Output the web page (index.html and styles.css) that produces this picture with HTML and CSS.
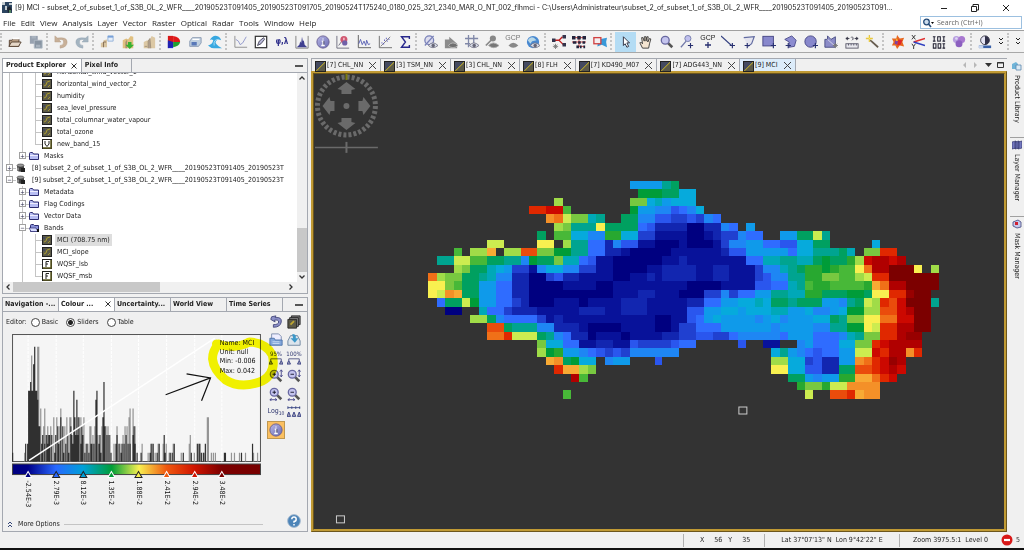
FILE: index.html
```html
<!DOCTYPE html>
<html lang="en">
<head>
<meta charset="utf-8">
<title>[9] MCI</title>
<link rel="stylesheet" href="styles.css">
</head>
<body>
<svg class="sprite" aria-hidden="true">
  <defs>
    <linearGradient id="ramp"><stop offset="0" stop-color="#000080"/><stop offset=".062" stop-color="#000088"/><stop offset=".175" stop-color="#2868ff"/><stop offset=".284" stop-color="#00a0d8"/><stop offset=".4" stop-color="#009e38"/><stop offset=".51" stop-color="#f8f050"/><stop offset=".62" stop-color="#f05a10"/><stop offset=".733" stop-color="#d01400"/><stop offset=".844" stop-color="#7c0000"/><stop offset="1" stop-color="#780000"/></linearGradient>
    <linearGradient id="ball" x2="1" y2="1"><stop offset="0" stop-color="#b8b8e8"/><stop offset="1" stop-color="#6a6ab0"/></linearGradient>
  </defs>
  <symbol id="band" viewBox="0 0 10 10"><rect x=".5" y=".5" width="9" height="9" fill="#5c5a48" stroke="#222"/><path d="M2 7l2-1 1-3 3-1M6 8l2-2" stroke="#a89a30" fill="none"/><path d="M1 2h2v2H1z" fill="#444a60"/></symbol>
  <symbol id="fband" viewBox="0 0 10 10"><rect x=".5" y=".5" width="9" height="9" fill="#fff" stroke="#222"/><path d="M1 9h8V1" stroke="#5c5a20" stroke-width="1.5" fill="none"/><path d="M4 8V2.5h3M4 5h2" stroke="#222" fill="none"/></symbol>
  <symbol id="vband" viewBox="0 0 10 10"><rect x=".5" y=".5" width="9" height="9" fill="#fff" stroke="#222"/><path d="M1 9h8V1" stroke="#5c5a20" stroke-width="1.5" fill="none"/><path d="M3 2v3l2 2.500l2-2.500V2" stroke="#222" fill="none"/></symbol>
  <symbol id="folder" viewBox="0 0 10 10"><path d="M.5 8.500v-6q0-1 1-1h2l1 1.500h5v5.500z" fill="#b8bef4" stroke="#2c2c70"/><path d="M1 4.500h8" stroke="#eef"/></symbol>
  <symbol id="folderopen" viewBox="0 0 10 10"><path d="M1.500 8.500v-6q0-1 1-1h2l1 1h4v6z" fill="#8890d8" stroke="#2c2c70"/><path d="M0 5h7l2 3.500H2z" fill="#d8dcff" stroke="#2c2c70" stroke-width=".7"/><path d="M8 6h2v3H8z" fill="#111"/></symbol>
  <symbol id="db" viewBox="0 0 10 10"><path d="M1 2.500v5q3.500 2.500 7 0v-5z" fill="#444"/><ellipse cx="4.500" cy="2.500" rx="3.500" ry="1.500" fill="#999" stroke="#333" stroke-width=".6"/><path d="M5 5h4v4H5z" fill="#222"/><path d="M2 4.500v3" stroke="#ccc"/></symbol>
  <symbol id="snap" viewBox="0 0 12 12"><path d="M1 0h10v11H1z" fill="#2c4460"/><path d="M1 0h3v3H1zM4 4h2v4H4zM8 1h3v2H8z" fill="#c4ccd0"/><path d="M6 6l3-2 2 4-4 3z" fill="#1c2430"/><path d="M8 8h2v3H8z" fill="#508060"/></symbol>
  <symbol id="open" viewBox="0 0 16 16"><path d="M1.500 13V6h3l1-1.500h7V13z" fill="#b49a80" stroke="#503c2c"/><path d="M1 13l3-5h11l-3 5z" fill="#e6d8c8" stroke="#503c2c"/><path d="M5 4h8" stroke="#fff" stroke-width="2"/></symbol>
  <symbol id="save" viewBox="0 0 16 16"><path d="M1 1h9v9H1z" fill="#98a2b0"/><path d="M6 6h9v9H6z" fill="#8894a2" stroke="#b0bac6"/><path d="M3 1h5v3H3zM8 11h5v3H8z" fill="#a8b2be"/></symbol>
  <symbol id="undo" viewBox="0 0 16 16"><path d="M1 1v7h7L5.500 5.500Q11 4 11 8t-4 4v3q8-1 8-7T4 3.500z" fill="#c8b098" stroke="#b09880" stroke-width=".5"/></symbol>
  <symbol id="redo" viewBox="0 0 16 16"><path d="M15 1v7H8l2.500-2.500Q5 4 5 8t4 4v3Q1 14 1 8T12 3.500z" fill="#a4b4c0" stroke="#90a0b0" stroke-width=".5"/></symbol>
  <symbol id="imp1" viewBox="0 0 16 16"><path d="M1 14V9l3-1V6l4-1v9z" fill="#d8c4a0"/><path d="M4 14V8h3" stroke="#806850" fill="none"/><path d="M9 1h6v6H9z" fill="#e4eefa" stroke="#90b0d8"/><path d="M9 1h6v2H9z" fill="#78a0d8"/></symbol>
  <symbol id="imp2" viewBox="0 0 16 16"><path d="M2 15V6l4-2 2 1 3-4 3 1v13z" fill="#e0c080"/><path d="M5 15V8l2-3v10" fill="#a89070"/><path d="M8 8h4v3h3l-5 5-5-5h3z" fill="#38b030"/></symbol>
  <symbol id="imp3" viewBox="0 0 16 16"><path d="M2 15V8l4-2 2 1 3-6 4 2v12z" fill="#dcc8a4"/><path d="M7 15V7l2-3 1 11M3 13h3" fill="#b0a090" stroke="#a09078"/></symbol>
  <symbol id="rgbshape" viewBox="0 0 16 16"><path d="M1 1h6v7H1z" fill="#d81818"/><path d="M7 1q8 1 8 7H7z" fill="#e01818"/><path d="M1 8h6v7H1z" fill="#1830d0"/><path d="M7 8h8q-1 5-8 6z" fill="#20a030"/><path d="M1 6l6 2v5l-6 2z" fill="#2020b0"/></symbol>
  <symbol id="box3d" viewBox="0 0 16 16"><path d="M2 7l3-4h10v6l-3 4H2z" fill="#c0d0e0" stroke="#8898b0"/><path d="M4 8h6v4H4z" fill="#5878b8"/><path d="M5 5h8" stroke="#fff" stroke-width="1.500"/></symbol>
  <symbol id="wave" viewBox="0 0 16 16"><path d="M0 12q5-1 6-6Q4 4 2 6q3-6 8-5 4 1 5 5-4-2-6 1t7 8H9q-5 1-9-3z" fill="#38a8e0"/><path d="M7 12q-1-7 5-7" stroke="#a8e0f8" fill="none"/></symbol>
  <symbol id="profile" viewBox="0 0 16 16"><path d="M1 1v13h14" stroke="#888" fill="none"/><path d="M2 5l3 2 2 4 3-2 4-7" stroke="#8890c8" fill="none"/></symbol>
  <symbol id="pen" viewBox="0 0 16 16"><rect x="1.500" y="1.500" width="13" height="13" fill="#fff" stroke="#333" stroke-width="1.400"/><path d="M4 12l2-5 5-4 1 2-4 5z" fill="#b8b8d8" stroke="#445"/></symbol>
  <symbol id="histo" viewBox="0 0 16 16"><path d="M1 1v14h14V1" stroke="#777" fill="none"/><path d="M2 14l3-3 1-4 1 2 1-7 1 5 1-1 1 5 3 3z" fill="#404090"/></symbol>
  <symbol id="info" viewBox="0 0 16 16"><circle cx="8" cy="8" r="7" fill="url(#ball)" stroke="#665c90"/><path d="M8 4v1M6.500 7H8v5M6 12h4" stroke="#fff" stroke-width="1.500" fill="none"/><path d="M9 7v4" stroke="#445"/></symbol>
  <symbol id="pinchart" viewBox="0 0 16 16"><path d="M1 1v14h14M3 12l3-4" stroke="#667" fill="none"/><circle cx="9" cy="5" r="4" fill="#d05870"/><circle cx="10" cy="9" r="3" fill="#7060a8"/><path d="M8 3h2v3H8z" fill="#f0b0c0"/></symbol>
  <symbol id="spectrum" viewBox="0 0 16 16"><path d="M1.500 0v14.500H16" stroke="#555" fill="none"/><path d="M2 10l2-5 2 6 2-4 2 5 1-6 2 5 2-1" stroke="#5058b0" fill="none"/></symbol>
  <symbol id="scatter" viewBox="0 0 16 16"><path d="M1.500 1v13.500H16" stroke="#666" fill="none"/><path d="M3 13L14 2" stroke="#777"/><path d="M4 9h1M6 10h1M7 6h1M10 7h1M9 4h1M12 5h1" stroke="#55b" stroke-width="1.500"/></symbol>
  <symbol id="sigma" viewBox="0 0 16 16"><path d="M13 4.500V2H4l4.500 6L4 14h9v-2.500" fill="none" stroke="#28288c" stroke-width="1.600"/></symbol>
  <symbol id="eye" viewBox="0 0 16 16"><path d="M5 12q5-6 11 0-6 5-11 0z" fill="#d8dce8" stroke="#778"/><circle cx="10.500" cy="12" r="2" fill="#667"/></symbol>
  <symbol id="nodata" viewBox="0 0 16 16"><circle cx="6" cy="6" r="5" fill="#dde" stroke="#7880b8" stroke-width="1.500"/><path d="M1 12L11 1" stroke="#7880b8" stroke-width="1.500"/><use href="#eye"/></symbol>
  <symbol id="geom" viewBox="0 0 16 16"><path d="M1 5h5V2l9 8v5H1z" fill="#8c8c8c"/><path d="M5 12q5-6 11 0-6 5-11 0z" fill="#707070" stroke="#bbb"/></symbol>
  <symbol id="grid" viewBox="0 0 16 16"><path d="M4 0v14M10 0v9M0 4h15M0 10h6" stroke="#8088a8" stroke-width="1.500"/><use href="#eye"/></symbol>
  <symbol id="pineye" viewBox="0 0 16 16"><circle cx="9" cy="4" r="3.500" fill="#888"/><path d="M7 6L1 12" stroke="#888" stroke-width="2"/><path d="M4 12q5-6 12 0-6 5-12 0z" fill="#777" stroke="#aaa"/></symbol>
  <symbol id="worldeye" viewBox="0 0 16 16"><circle cx="8" cy="8" r="7" fill="#4888d0"/><path d="M2 6q3-5 7-3l3 3-5 1-2 3z" fill="#b8d8e8"/><use href="#eye"/></symbol>
  <symbol id="graph" viewBox="0 0 16 16"><path d="M3 6h5l4-4M8 6l5 5" stroke="#c02020" stroke-width="1.500" fill="none"/><path d="M0 4h4v4H0zM12 0h4v4h-4zM12 9h4v4h-4z" fill="#34344c"/><path d="M4 10v6M1 13h6M2 11l4 4M6 11l-4 4" stroke="#777"/></symbol>
  <symbol id="batch" viewBox="0 0 16 16"><path d="M0 3h16M0 8h16M6 13h8M8 1v12" stroke="#c83030"/><path d="M0 1h4v4H0zM6 1h4v4H6zM12 1h4v4h-4zM1 7h4v3H1zM7 7h3v3H7zM12 7h3v3h-3zM5 12h3v3H5zM9 12h2v3H9zM13 12h2v3h-2z" fill="#24243c"/></symbol>
  <symbol id="coast" viewBox="0 0 16 16"><path d="M6 5l10-2-1 5 1 6-6-3-5 2z" fill="#3898d8"/><rect x="1" y="3" width="8" height="7" fill="#f4eef0" stroke="#d04040" stroke-width="1.500"/></symbol>
  <symbol id="cursor" viewBox="0 0 16 16"><path d="M5 2l7 7H9l2 4-2 1-2-4-2 2z" fill="#fff" stroke="#223"/></symbol>
  <symbol id="hand" viewBox="0 0 16 16"><path d="M4 15L1 9l1-1 2 2-1-7h1.500L6 7V2h2v5l1-5h1.500L10 8l2-4 1.500.5L12 10l-1 5z" fill="#f4e4d0" stroke="#333"/></symbol>
  <symbol id="mag" viewBox="0 0 16 16"><path d="M9 9l5 5" stroke="#555" stroke-width="3"/><circle cx="6" cy="6" r="4.500" fill="#c4c4ee" stroke="#6868a0" stroke-width="1.500"/></symbol>
  <symbol id="plus" viewBox="0 0 16 16"><path d="M12 9v6M9 12h6" stroke="#283070" stroke-width="1.300"/></symbol>
  <symbol id="pinadd" viewBox="0 0 16 16"><circle cx="9" cy="4" r="3.500" fill="#c0c0ee" stroke="#7078a8"/><path d="M7 7l-6 7" stroke="#7078a8" stroke-width="1.500"/><use href="#plus"/></symbol>
  <symbol id="lineadd" viewBox="0 0 16 16"><path d="M0 1l12 11" stroke="#334080" stroke-width="1.300"/><path d="M13 9v6M10 12h6" stroke="#283070" stroke-width="1.300"/></symbol>
  <symbol id="polyadd" viewBox="0 0 16 16"><path d="M2 3l12-1-3 8-4 3" fill="#e4e4ee" stroke="#606aa0" stroke-width="1.300"/><path d="M6 9v6M3 12h6" stroke="#283070" stroke-width="1.300"/></symbol>
  <symbol id="rectadd" viewBox="0 0 16 16"><rect x="1" y="1.500" width="12" height="11" fill="#8888cc" stroke="#404080"/><path d="M13 9v6M10 12h6" stroke="#283070" stroke-width="1.300"/></symbol>
  <symbol id="pentadd" viewBox="0 0 16 16"><path d="M2 5l8-4 5 5-2 7-6 1V8z" fill="#8c8cd0" stroke="#484888"/><path d="M6 9v6M3 12h6" stroke="#283070" stroke-width="1.300"/></symbol>
  <symbol id="circadd" viewBox="0 0 16 16"><circle cx="7.500" cy="7.500" r="6.500" fill="#8888cc" stroke="#404080"/><path d="M13 9v6M10 12h6" stroke="#283070" stroke-width="1.300"/></symbol>
  <symbol id="wand" viewBox="0 0 16 16"><path d="M1 14V5h3V1l4 4 5-3v12z" fill="#8c8cc8" stroke="#444880"/><path d="M4 5l9 8" stroke="#dde"/><path d="M13 9v6M10 12h6M11 10l4 4M15 10l-4 4" stroke="#777"/></symbol>
  <symbol id="ruler" viewBox="0 0 16 16"><path d="M1 4h4M11 4h4M1 4l2-1.500v3zM15 4l-2-1.500v3zM7 3q1-2 2 0t-1 3" stroke="#334" fill="none"/><rect x="1" y="10" width="14" height="5" fill="#e8e8ee" stroke="#556"/><path d="M4 10v2M7 10v2M10 10v2M13 10v2" stroke="#556"/></symbol>
  <symbol id="magic" viewBox="0 0 16 16"><path d="M5 5l10 9" stroke="#665c50" stroke-width="2"/><path d="M5 0v8M1 4h8" stroke="#e8c840" stroke-width="1.500"/><path d="M3 2l4 4" stroke="#fff080"/></symbol>
  <symbol id="burst" viewBox="0 0 16 16"><path d="M7 0l3 4 5-1-2 5 2 5-5-1-3 4-2-4-4 0 2-4-2-4 5 0z" fill="#e86820"/><path d="M8 5l5 1-2 5-4 1z" fill="#e02828"/><path d="M5 6l3 1-1 4-3-1z" fill="#8040a0"/><path d="M6 4l2 2-2 1z" fill="#f8d030"/></symbol>
  <symbol id="xy" viewBox="0 0 16 16"><path d="M3 8L16 4" stroke="#e03030" stroke-width="1.700"/><path d="M3 8l13 4" stroke="#3040c0" stroke-width="1.700"/><path d="M1 0l4 5M5 0L1 5M1 10l2 3 2-3M3 13v3" stroke="#222" fill="none"/></symbol>
  <symbol id="bits" viewBox="0 0 16 16"><path d="M1 2h3M1 7h3M2.500 2v5M12 2h3M12 7h3M13.500 2v5M12 10h3M12 15h3M13.500 10v5" stroke="#223" stroke-width="1.200"/><rect x="6.500" y="2" width="3" height="5" fill="none" stroke="#223" stroke-width="1.200"/><path d="M1.500 10h3v5h-3zM7 10h3v5H7z" fill="none" stroke="#223" stroke-width="1.200"/></symbol>
  <symbol id="heart" viewBox="0 0 16 16"><circle cx="5" cy="5" r="4" fill="#b8a0e0"/><circle cx="11" cy="5" r="4" fill="#a878d0"/><circle cx="8" cy="10" r="4" fill="#8c60c0"/><circle cx="5" cy="4" r="1.500" fill="#e0d8f4"/></symbol>
  <symbol id="contrast" viewBox="0 0 16 16"><circle cx="8" cy="6" r="5" fill="#e4e4f4" stroke="#334"/><path d="M8 1a5 5 0 010 10z" fill="#303048"/><path d="M1 12h14v3H1z" fill="#3860a8"/><path d="M1 12h5v3H1z" fill="#c4d4f0"/></symbol>
  <symbol id="revert" viewBox="0 0 16 16"><path d="M3 2l5-1-1 2q8-1 7 5t-9 6v-3q6 0 6-3T6 6l1 2L2 5z" fill="#8c90c8" stroke="#404478"/></symbol>
  <symbol id="stack" viewBox="0 0 16 16"><path d="M5 1h10v10H5z" fill="#777" stroke="#222"/><path d="M3 3h10v10H3z" fill="#888" stroke="#222"/><path d="M1 5h10v10H1z" fill="#5c5a48" stroke="#222"/><path d="M4 11l4-4" stroke="#c0a830" stroke-width="2"/></symbol>
  <symbol id="impf" viewBox="0 0 16 16"><path d="M3 1h8l3 3v6H3z" fill="#eef" stroke="#78a"/><path d="M1 14V6h5l1 2h8v6z" fill="#84a8dc" stroke="#4870a8"/><path d="M4 10h8M4 12h8" stroke="#c8dcf4"/></symbol>
  <symbol id="expf" viewBox="0 0 16 16"><path d="M1 14V9l3-6h8l3 6v5z" fill="#dce4ec" stroke="#68809c"/><path d="M6 1q5 0 4 5h3l-4 5-5-5h3z" fill="#3c98c8"/></symbol>
  <symbol id="zin" viewBox="0 0 16 16"><use href="#mag"/><path d="M4 6h4M6 4v4" stroke="#112"/></symbol>
  <symbol id="zout" viewBox="0 0 16 16"><use href="#mag"/><path d="M4 6h4" stroke="#112"/></symbol>
  <symbol id="vert" viewBox="0 0 16 16"><path d="M14 1v8M12.500 3L14 1l1.500 2M12.500 7L14 9l1.500-2" stroke="#448" fill="none"/></symbol>
  <symbol id="horz" viewBox="0 0 16 16"><path d="M1 14.500h8M3 13l-2 1.500L3 16M7 13l2 1.500L7 16" stroke="#448" fill="none"/></symbol>
  <symbol id="even" viewBox="0 0 16 16"><path d="M1 3h14M1 1.500v3M5.500 1.500v3M10 1.500v3M14.500 1.500v3" stroke="#334080"/><path d="M0 13l2-5 2 5zM6 13l2-5 2 5zM12 13l2-5 2 5z" fill="#aab" stroke="#303880"/></symbol>
  <symbol id="help" viewBox="0 0 16 16"><circle cx="8" cy="8" r="7.300" fill="#4c84b8" stroke="#a8bcd0"/><path d="M5.500 6q0-2.500 2.500-2.500T10.500 6 8 8.500V10M8 11.500v1.500" stroke="#fff" stroke-width="1.700" fill="none"/></symbol>
  <symbol id="lib" viewBox="0 0 10 10"><path d="M0 3l4-2 2 2v5H0z" fill="#70b4d8"/><path d="M4 4h5v5H4z" fill="#dceaf4" stroke="#5c88b0" stroke-width=".8"/></symbol>
  <symbol id="layers" viewBox="0 0 10 10"><path d="M0 2l4-1v7l-4 1zM3 2l4-1v7L3 9zM6 2l4-1v7L6 9z" fill="#7478c0" stroke="#303468" stroke-width=".7"/></symbol>
  <symbol id="mask" viewBox="0 0 10 10"><path d="M1 3l5-2 3 2v5l-4 1-4-2z" fill="#c4c8ec" stroke="#40447c" stroke-width=".8"/><path d="M3 3h3v3H3z" fill="#d02030"/></symbol>
</svg>

<header class="titlebar">
  <svg class="i12"><use href="#snap"/></svg>
  <h1>[9] MCI - subset_2_of_subset_1_of_S3B_OL_2_WFR____20190523T091405_20190523T091705_20190524T175240_0180_025_321_2340_MAR_O_NT_002_flhmci - C:\Users\Administrateur\subset_2_of_subset_1_of_S3B_OL_2_WFR____20190523T091405_20190523T091...</h1>
  <div class="winbtns">
    <button aria-label="Minimize"><svg class="i8" viewBox="0 0 8 8"><path d="M1 4.500h6" stroke="#222"/></svg></button>
    <button aria-label="Restore"><svg class="i8" viewBox="0 0 8 8"><path d="M.5 2.500h5v5h-5zM2 2V.5h5.500V6H6" stroke="#222" fill="none"/></svg></button>
    <button aria-label="Close"><svg class="i8" viewBox="0 0 8 8"><path d="M1 1l6 6M7 1L1 7" stroke="#222"/></svg></button>
  </div>
</header>

<div class="menubar">
  <nav><button>File</button><button>Edit</button><button>View</button><button>Analysis</button><button>Layer</button><button>Vector</button><button>Raster</button><button>Optical</button><button>Radar</button><button>Tools</button><button>Window</button><button>Help</button></nav>
  <label class="search"><svg class="i12 lens" viewBox="0 0 12 12"><circle cx="4.500" cy="5" r="2.800" fill="#cde" stroke="#234a78" stroke-width="1.300"/><path d="M6.500 7l2.500 3" stroke="#234a78" stroke-width="1.600"/><path d="M9 5h3l-1.500 2z"/></svg><input type="text" placeholder="Search (Ctrl+I)" aria-label="Search"></label>
</div>

<div class="toolbar">
  <i></i>
  <button aria-label="Open"><svg><use href="#open"/></svg></button><button aria-label="Save"><svg><use href="#save"/></svg></button>
  <i></i>
  <button aria-label="Undo"><svg><use href="#undo"/></svg></button><button aria-label="Redo"><svg><use href="#redo"/></svg></button>
  <i></i>
  <button aria-label="Import product"><svg><use href="#imp1"/></svg></button><button aria-label="Import vector"><svg><use href="#imp2"/></svg></button><button aria-label="Import shape"><svg><use href="#imp3"/></svg></button>
  <i></i>
  <button aria-label="RGB image"><svg><use href="#rgbshape"/></svg></button><button aria-label="Cube"><svg><use href="#box3d"/></svg></button><button aria-label="Ocean"><svg><use href="#wave"/></svg></button>
  <i></i>
  <button aria-label="Profile plot"><svg><use href="#profile"/></svg></button><button aria-label="Geometry"><svg><use href="#pen"/></svg></button><button class="phi" aria-label="Geo-coding">φ,λ</button><button aria-label="Histogram"><svg><use href="#histo"/></svg></button><button aria-label="Information"><svg><use href="#info"/></svg></button><button aria-label="Pin plot"><svg><use href="#pinchart"/></svg></button><button aria-label="Spectrum"><svg><use href="#spectrum"/></svg></button><button aria-label="Scatter plot"><svg><use href="#scatter"/></svg></button><button aria-label="Statistics"><svg><use href="#sigma"/></svg></button>
  <i></i>
  <button aria-label="No-data overlay"><svg><use href="#nodata"/></svg></button><button aria-label="Geometry overlay"><svg><use href="#geom"/></svg></button><button aria-label="Graticule overlay"><svg><use href="#grid"/></svg></button><button aria-label="Pin overlay"><svg><use href="#pineye"/></svg></button><button class="gcp grey" aria-label="GCP overlay"><span>GCP</span><svg viewBox="4 7 12 9"><path d="M5 12q5-6 11 0-6 5-11 0z" fill="#888"/></svg></button><button aria-label="World map overlay"><svg><use href="#worldeye"/></svg></button>
  <i></i>
  <button aria-label="Graph builder"><svg><use href="#graph"/></svg></button><button aria-label="Batch"><svg><use href="#batch"/></svg></button><button aria-label="Mosaic"><svg><use href="#coast"/></svg></button>
  <i></i>
  <button class="on" aria-label="Select"><svg><use href="#cursor"/></svg></button><button aria-label="Pan"><svg><use href="#hand"/></svg></button><button aria-label="Zoom"><svg><use href="#mag"/></svg></button><button aria-label="Add pin"><svg><use href="#pinadd"/></svg></button><button class="gcp" aria-label="Add GCP"><span>GCP</span><svg viewBox="0 0 12 8"><path d="M6 1v6M3 4h6" stroke="#283070" stroke-width="1.300"/></svg></button><button aria-label="Draw line"><svg><use href="#lineadd"/></svg></button><button aria-label="Draw polyline"><svg><use href="#polyadd"/></svg></button><button aria-label="Draw rectangle"><svg><use href="#rectadd"/></svg></button><button aria-label="Draw polygon"><svg><use href="#pentadd"/></svg></button><button aria-label="Draw ellipse"><svg><use href="#circadd"/></svg></button><button aria-label="Mask tool"><svg><use href="#wand"/></svg></button><button aria-label="Range finder"><svg><use href="#ruler"/></svg></button><button aria-label="Magic wand"><svg><use href="#magic"/></svg></button>
  <i></i>
  <button aria-label="Cluster"><svg><use href="#burst"/></svg></button><button aria-label="XY"><svg><use href="#xy"/></svg></button><button aria-label="Bits"><svg><use href="#bits"/></svg></button><button aria-label="Density"><svg><use href="#heart"/></svg></button>
  <i></i>
  <button aria-label="Contrast"><svg><use href="#contrast"/></svg></button>
  <button class="more" aria-label="More tools"><svg viewBox="0 0 8 12"><path d="M2 2l2 2 2-2M2 6l2 2 2-2" stroke="#222" fill="none"/></svg></button>
  <i></i>
  <button class="more" aria-label="More toolbars"><svg viewBox="0 0 8 12"><path d="M2 2l2 2 2-2M2 6l2 2 2-2" stroke="#222" fill="none"/></svg></button>
</div>

<main>
  <div class="left">
    <section class="panel">
      <div class="tabs"><button class="tab cur">Product Explorer <svg class="x" viewBox="0 0 8 8"><path d="M1.500 1.500l5 5M6.500 1.500l-5 5" stroke="#333"/></svg></button><button class="tab">Pixel Info</button><span class="rest"></span><button class="min" aria-label="Minimize panel"></button></div>
      <div class="treewrap">
        <ul class="tree">
          <li><b></b><b></b><b class="h"></b><svg><use href="#band"/></svg><span>horizontal_wind_vector_1</span></li>
          <li><b></b><b></b><b class="h"></b><svg><use href="#band"/></svg><span>horizontal_wind_vector_2</span></li>
          <li><b></b><b></b><b class="h"></b><svg><use href="#band"/></svg><span>humidity</span></li>
          <li><b></b><b></b><b class="h"></b><svg><use href="#band"/></svg><span>sea_level_pressure</span></li>
          <li><b></b><b></b><b class="h"></b><svg><use href="#band"/></svg><span>total_columnar_water_vapour</span></li>
          <li><b></b><b></b><b class="h"></b><svg><use href="#band"/></svg><span>total_ozone</span></li>
          <li><b></b><b></b><b class="h last"></b><svg><use href="#vband"/></svg><span>new_band_15</span></li>
          <li><b></b><b class="h last"><button>+</button></b><svg><use href="#folder"/></svg><span>Masks</span></li>
          <li><b class="h"><button>+</button></b><svg><use href="#db"/></svg><span class="prod">[8] subset_2_of_subset_1_of_S3B_OL_2_WFR____20190523T091405_20190523T</span></li>
          <li><b class="h last"><button>−</button></b><svg><use href="#db"/></svg><span class="prod">[9] subset_2_of_subset_1_of_S3B_OL_2_WFR____20190523T091405_20190523T</span></li>
          <li><b class="e"></b><b class="h"><button>+</button></b><svg><use href="#folder"/></svg><span>Metadata</span></li>
          <li><b class="e"></b><b class="h"><button>+</button></b><svg><use href="#folder"/></svg><span>Flag Codings</span></li>
          <li><b class="e"></b><b class="h"><button>+</button></b><svg><use href="#folder"/></svg><span>Vector Data</span></li>
          <li><b class="e"></b><b class="h"><button>−</button></b><svg><use href="#folderopen"/></svg><span>Bands</span></li>
          <li><b class="e"></b><b></b><b class="h"></b><svg><use href="#band"/></svg><span class="sel">MCI (708.75 nm)</span></li>
          <li><b class="e"></b><b></b><b class="h"></b><svg><use href="#band"/></svg><span>MCI_slope</span></li>
          <li><b class="e"></b><b></b><b class="h"></b><svg><use href="#fband"/></svg><span>WQSF_lsb</span></li>
          <li><b class="e"></b><b></b><b class="h last"></b><svg><use href="#fband"/></svg><span>WQSF_msb</span></li>
        </ul>
        <div class="vscroll"><svg viewBox="0 0 10 10"><path d="M2.500 6.500L5 4l2.500 2.500" stroke="#333" fill="none" stroke-width="1.300"/></svg><span></span><svg viewBox="0 0 10 10"><path d="M2.500 3.500L5 6l2.500-2.500" stroke="#333" fill="none" stroke-width="1.300"/></svg></div>
      </div>
      <div class="hscroll"><svg viewBox="0 0 10 10"><path d="M6.500 2.500L4 5l2.500 2.500" stroke="#333" fill="none" stroke-width="1.300"/></svg><span></span><svg viewBox="0 0 10 10"><path d="M3.500 2.500L6 5 3.500 7.500" stroke="#333" fill="none" stroke-width="1.300"/></svg></div>
    </section>

    <section class="panel">
      <div class="tabs five"><button class="tab">Navigation -...</button><button class="tab cur">Colour ... <svg class="x" viewBox="0 0 8 8"><path d="M1.500 1.500l5 5M6.500 1.500l-5 5" stroke="#333"/></svg></button><button class="tab">Uncertainty...</button><button class="tab">World View</button><button class="tab">Time Series</button><button class="min" aria-label="Minimize panel"></button></div>
      <div class="colour">
        <div class="editor">
          <div class="radios"><span>Editor:</span><label><input type="radio" name="ed">Basic</label><label><input type="radio" name="ed" checked>Sliders</label><label><input type="radio" name="ed">Table</label></div>
          <svg class="chart" id="chart" viewBox="6 330 260 182">
            <rect x="12.500" y="334.500" width="247" height="126.500" fill="#f5f5f5" stroke="#555"/>
            <path d="M28 335v126M56 335v126M83 335v126M111 335v126M138 335v126M166 335v126M194 335v126M221 335v126" stroke="#fff" stroke-dasharray="3 1"/>
            <path id="bars-light" fill="#949494"/>
            <path id="bars-dark" fill="#303030"/>
            <path d="M29 460L214 338" stroke="#fff" stroke-width="1.500"/>
            <rect x="12.500" y="463.500" width="247" height="10.500" fill="url(#ramp)" stroke="#444"/>
            <g id="sliders"></g>
            <g class="stats"><text x="219" y="345">Name: MCI</text><text x="219" y="354">Unit: null</text><text x="219" y="363">Min: -0.006</text><text x="219" y="373">Max: 0.042</text></g>
          </svg>
          <div class="moreopt"><svg class="i8" viewBox="0 0 8 8"><path d="M2 4l2-2 2 2M2 7l2-2 2 2" stroke="#347" fill="none"/></svg><button>More Options</button><hr></div>
        </div>
        <div class="tools">
          <button aria-label="Reset"><svg><use href="#revert"/></svg></button><button aria-label="Apply to bands"><svg><use href="#stack"/></svg></button>
          <button aria-label="Import palette"><svg><use href="#impf"/></svg></button><button aria-label="Export palette"><svg><use href="#expf"/></svg></button>
          <button class="pct"><span>95%</span><svg viewBox="0 7 16 9"><path d="M2 11V9h12v2" fill="none" stroke="#4c5080"/><path d="M0 15l2-4 2 4zM12 15l2-4 2 4z" fill="#aab" stroke="#303880"/></svg></button><button class="pct"><span>100%</span><svg viewBox="0 7 16 9"><path d="M2 11V9h12v2" fill="none" stroke="#4c5080"/><path d="M0 15l2-4 2 4zM12 15l2-4 2 4z" fill="#aab" stroke="#303880"/></svg></button>
          <button aria-label="Zoom in vertically"><svg><use href="#zin"/><use href="#vert"/></svg></button><button aria-label="Zoom out vertically"><svg><use href="#zout"/><use href="#vert"/></svg></button>
          <button aria-label="Zoom in horizontally"><svg><use href="#zin"/><use href="#horz"/></svg></button><button aria-label="Zoom out horizontally"><svg><use href="#zout"/><use href="#horz"/></svg></button>
          <button class="log">Log<sub>10</sub></button><button aria-label="Distribute evenly"><svg><use href="#even"/></svg></button>
          <button class="infoon" aria-label="Show information"><svg><use href="#info"/></svg></button>
          <button class="help" aria-label="Help"><svg><use href="#help"/></svg></button>
        </div>
        <svg class="notes" viewBox="3 311 304 220" preserveAspectRatio="xMinYMin meet">
          <path d="M217 343Q236 349 250 341Q267 342 273 354Q277 372 263 380Q242 389 226 379Q214 369 213 358Q213 350 219 343" fill="none" stroke="#fafa00" stroke-width="9" stroke-linecap="round" stroke-linejoin="round"/>
          <path d="M166 394L211 377M187 373L211 377L202 400" stroke="#111" fill="none" stroke-width="1.200"/>
        </svg>
      </div>
    </section>
  </div>

  <section class="docs">
    <div class="doctabs">
      <button>[7] CHL_NN</button><button>[3] TSM_NN</button><button>[3] CHL_NN</button><button>[8] FLH</button><button>[7] KD490_M07</button><button>[7] ADG443_NN</button><button class="cur">[9] MCI</button>
      <svg class="docnav" viewBox="0 0 46 10"><path d="M5 2v6L2 5zM13 2v6l3-3z" fill="#b8b8b8"/><path d="M24 3h7l-3.500 4z" fill="#333"/><path d="M36.500 2.500h6v5h-6zM36 3h7" fill="none" stroke="#333"/></svg>
    </div>
    <div class="view">
      <svg id="map" viewBox="314 74 691 455" preserveAspectRatio="xMinYMin meet">
        <g stroke="#6a6a6a" fill="#6a6a6a">
          <circle cx="346.500" cy="106" r="29" fill="none" stroke-width="5" stroke-dasharray="3 2.060"/>
          <circle cx="346.500" cy="106" r="3" stroke="none"/>
          <path stroke="none" d="M346.500 82l9 7-4 1v4h-10v-4l-4-1zM346.500 130l9-7-4-1v-4h-10v4l-4 1zM322.500 106l7-9 1 4h4v10h-4l-1 4zM370.500 106l-7-9-1 4h-4v10h4l1 4z"/>
          <path d="M315 147.500h63" stroke-width="1.500"/><path d="M346.500 142v11" stroke-width="2"/>
        </g>
        <path d="M346.500 74v6" stroke="#7c7c10" stroke-width="2"/>
        <g id="cells" shape-rendering="crispEdges"></g>
        <rect x="739.500" y="407.500" width="8" height="7" fill="none" stroke="#ccc"/>
        <rect x="336.500" y="516.500" width="8" height="7" fill="none" stroke="#ccc"/>
      </svg>
    </div>
  </section>

  <aside class="rail">
    <button><svg><use href="#lib"/></svg>Product Library</button>
    <button><svg><use href="#layers"/></svg>Layer Manager</button>
    <button><svg><use href="#mask"/></svg>Mask Manager</button>
  </aside>
</main>

<footer class="status">
  <span class="xy"><span>X</span><span>56</span><span>Y</span><span>35</span></span>
  <span class="ll">Lat 37°07'13" N &nbsp;Lon 9°42'22" E</span>
  <span class="zl">Zoom 3975.5:1 &nbsp;Level 0</span>
  <span class="err"><svg viewBox="0 0 12 12"><circle cx="6" cy="6" r="5.500" fill="#d81818"/><path d="M3 6h6" stroke="#fff" stroke-width="2.200"/></svg>5</span>
</footer>
<script src="scene.js"></script>
</body>
</html>
```

FILE: styles.css
```css
:root { --ui: "DejaVu Sans Condensed", "Open Sans", sans-serif; --seg: "Open Sans", "Noto Sans", sans-serif; --edge: #a4a8b0; }
* { box-sizing: border-box; }
body { margin: 0; min-height: 100vh; display: flex; flex-direction: column; background: #f0f0f0; color: #222; font: 7px/12px var(--ui); border-bottom: 2px solid #111; overflow: hidden; }
button { border: 0; padding: 0; margin: 0; background: none; font: inherit; color: inherit; white-space: nowrap; }
svg { display: block; flex: none; }
ul { list-style: none; margin: 0; padding: 0; }
.sprite { position: absolute; width: 0; height: 0; }
.i12 { width: 12px; height: 12px; }
.i8 { width: 8px; height: 8px; }

.titlebar { display: flex; align-items: center; height: 16px; padding-left: 1px; background: #fff; }
.titlebar h1 { flex: 1; min-width: 0; margin: 0 0 0 2px; font: 7px/12px Inter, sans-serif; white-space: nowrap; overflow: hidden; }
.winbtns { display: flex; gap: 23px; padding-right: 14px; }
.menubar { display: flex; justify-content: space-between; height: 14px; background: #fff; font: 8px/14px var(--seg); }
.menubar nav { display: flex; gap: 5px; padding-left: 3px; }
.search { display: flex; align-items: center; width: 102px; height: 13px; margin-right: 2px; border: 1px solid #9cc0e0; background: #fff; }
.lens { margin: 0 3px 0 1px; }
.search input { min-width: 0; width: 80px; border: 0; padding: 0; outline: 0; font: 7px var(--seg); }
.search input::placeholder { color: #666; }

.toolbar { display: flex; align-items: center; height: 23px; padding: 1px 0; border-top: 1px solid #a0a0a0; border-bottom: 1px solid #a8a8a8; background: #f2f2f2; }
.toolbar > i { flex: 0 0 5px; height: 17px; border-left: 2px dotted #c4c4c4; }
.toolbar > button { flex: 1 1 0; min-width: 0; height: 20px; display: flex; flex-direction: column; align-items: center; justify-content: center; }
.toolbar svg { width: 14px; height: 14px; }
.toolbar .phi { font: bold 8px var(--ui); color: #30308c; }
.toolbar .gcp { font: 7px/7px "Liberation Sans", sans-serif; }
.toolbar .gcp svg { width: 12px; height: 8px; }
.toolbar .grey { color: #777; }
.toolbar .on { background: #b4dcf4; }
.toolbar .more { flex: 0 0 12px; }
.toolbar .more svg { width: 8px; height: 12px; }

main { flex: 1; display: grid; grid-template-columns: 306px minmax(0, 1fr) 14px; column-gap: 3px; padding: 5px 0 0 2px; }
.left { display: flex; flex-direction: column; gap: 3px; min-width: 0; }
.panel { flex: 1 1 0; min-height: 0; display: flex; flex-direction: column; border: 1px solid var(--edge); }
.tabs { display: flex; height: 14px; border-bottom: 1px solid var(--edge); font: bold 7px/13px var(--ui); }
.tab { display: flex; align-items: center; justify-content: space-between; gap: 4px; padding: 0 3px; border-right: 1px solid var(--edge); font-size: 7px; }
.tab.cur { background: #fff; }
.tab:nth-child(2) { padding-right: 13px; }
.five .tab { flex: 0 0 56px; padding: 0 2px; }
.x { width: 8px; height: 8px; }
.rest { flex: 1; }
.min { width: 8px; height: 2px; margin: 6px 4px 0 auto; background: #555; }

.treewrap { flex: 1; min-height: 0; display: flex; background: #fff; }
.tree { flex: 1; min-width: 0; display: flex; flex-direction: column; justify-content: flex-end; overflow: hidden; }
.tree li { flex: none; display: flex; align-items: center; height: 12px; }
.tree li > svg { width: 10px; height: 10px; }
.tree li > span { margin-left: 3px; padding: 0 2px; white-space: nowrap; }
.tree .prod { margin-left: 4px; overflow: hidden; }
.tree .sel { background: #dedede; }
.tree b { flex: 0 0 13px; align-self: stretch; display: grid; place-items: center start; background: linear-gradient(#c4c4c4, #c4c4c4) 6px 0 / 1px 100% no-repeat; font-weight: 400; }
.tree b.h { background: linear-gradient(#c4c4c4, #c4c4c4) 6px 0 / 1px 100% no-repeat, linear-gradient(#c4c4c4, #c4c4c4) 6px 6px / 7px 1px no-repeat; }
.tree b.last { background: linear-gradient(#c4c4c4, #c4c4c4) 6px 0 / 1px 6px no-repeat, linear-gradient(#c4c4c4, #c4c4c4) 6px 6px / 7px 1px no-repeat; }
.tree b.e { background: none; }
.tree b button { width: 7px; height: 7px; margin-left: 3px; border: 1px solid #a0a0a0; background: #fff; font: 6px/5px var(--ui); color: #224; }
.vscroll { flex: 0 0 10px; display: flex; flex-direction: column; background: #f0f0f0; }
.vscroll svg, .hscroll svg { width: 10px; height: 10px; }
.vscroll span { height: 44px; margin-top: auto; background: #c8c8c8; }
.hscroll { display: flex; align-items: center; height: 11px; padding-right: 11px; background: #f0f0f0; }
.hscroll span { width: 147px; height: 10px; margin-right: auto; background: #c8c8c8; }

.colour { flex: 1; min-height: 0; display: flex; padding: 0 4px 0 3px; position: relative; }
.editor { flex: 1; min-width: 0; display: flex; flex-direction: column; }
.radios { display: flex; align-items: center; gap: 8px; height: 18px; padding-top: 3px; }
.radios span { margin-right: -4px; }
.radios label { display: flex; align-items: center; gap: 2px; }
.radios input { appearance: none; width: 9px; height: 9px; margin: 0; border: 1px solid #444; border-radius: 50%; background: #fff; }
.radios input:checked { background: radial-gradient(circle, #222 2px, #fff 3px); }
.chart { width: 100%; overflow: visible; }
.chart text { font: 7px var(--ui); fill: #111; }
.notes { position: absolute; inset: 0; width: 100%; height: 100%; mix-blend-mode: multiply; pointer-events: none; }
.moreopt { display: flex; align-items: center; gap: 4px; margin-top: auto; height: 14px; }
.moreopt hr { flex: 1; border: 0; border-top: 1px solid #c4c4c4; margin: 0 4px 0 0; }
.tools { flex: 0 0 36px; display: grid; grid-template-columns: 18px 18px; grid-auto-rows: 18px; place-items: center; align-content: start; padding-top: 1px; position: relative; }
.tools svg { width: 14px; height: 14px; }
.tools .pct { font: 6px/6px var(--ui); color: #303870; display: flex; flex-direction: column; align-items: center; }
.tools .pct svg { width: 14px; height: 8px; }
.tools .log { font: 7px/10px var(--ui); color: #303870; }
.tools sub { font-size: 5px; line-height: 5px; }
.tools .infoon { padding: 1px; background: #fcc060; border: 1px solid #c09850; }
.tools .help { position: absolute; right: 2px; bottom: 3px; }

.docs { display: flex; flex-direction: column; min-width: 0; }
.doctabs { display: flex; height: 13px; border-top: 1px solid var(--edge); border-left: 1px solid var(--edge); }
.doctabs button { position: relative; padding: 0 17px 0 15px; border-right: 1px solid var(--edge); }
.doctabs button::before { content: ""; position: absolute; left: 3px; top: 2px; width: 9px; height: 9px; border: 1px solid #222; background: linear-gradient(135deg, #444a60 45%, #a89a30 50%, #5c5a48 60%); }
.doctabs button::after { content: ""; position: absolute; right: 4px; top: 3px; width: 7px; height: 7px; background: linear-gradient(45deg, transparent 45%, #444 46% 54%, transparent 55%), linear-gradient(-45deg, transparent 45%, #444 46% 54%, transparent 55%); }
.doctabs .cur { background-color: #dcecfa; }
.docnav { width: 46px; height: 10px; margin: 1px 0 0 auto; }
.view { flex: 1; min-height: 0; display: flex; border: 3px ridge #c09a34; background: #333; }
#map { flex: 1; min-width: 0; height: 100%; background: #333; }

.rail { display: flex; flex-direction: column; padding-top: 1px; }
.rail button { display: flex; align-items: center; gap: 4px; writing-mode: vertical-rl; height: 79px; padding: 2px 0 8px; border-bottom: 1px solid #a0a0a0; font-size: 7px; }
.rail button:last-child { border: 0; }
.rail svg { width: 10px; height: 10px; }

.status { display: flex; justify-content: flex-end; align-items: center; height: 16px; }
.status > span { border-left: 1px solid #b0b0b0; height: 13px; line-height: 13px; }
.xy { width: 81px; display: flex; gap: 6px; padding-left: 16px; }
.xy span:nth-child(2) { margin-left: 4px; }
.xy span:nth-child(4) { margin-left: 4px; }
.ll { width: 135px; text-align: center; }
.zl { width: 102px; padding-left: 13px; }
.status .err { display: flex; align-items: center; gap: 3px; border: 0; padding-right: 4px; color: #333; }
.err svg { width: 12px; height: 12px; }
```

FILE: scene.js
```js
const NS = "http://www.w3.org/2000/svg";
const make = (parent, tag, attrs) => {
  const el = document.createElementNS(NS, tag);
  for (const key in attrs) el.setAttribute(key, attrs[key]);
  parent.appendChild(el);
  return el;
};

// One letter per colour class, from low to high.
const palette = {
  0: "#000080", 1: "#08129a", 2: "#1226b0", 3: "#2040d0", 4: "#2a56ee", 5: "#2f6cff", 6: "#1e86f4",
  7: "#0f9aea", 8: "#06aadc", 9: "#00a8b8", a: "#00a490", b: "#00a060", c: "#009c38", d: "#28a830",
  e: "#48b838", f: "#78c840", g: "#a0dc48", h: "#ccec50", i: "#f8f050", j: "#f8aa34", k: "#f49028",
  l: "#f07018", m: "#ea4c0c", n: "#e02800", o: "#cc0800", p: "#b00000", q: "#980000", r: "#7c0000"
};

// Each row lists runs as firstColumn:classes.
const rows = [
  "24:7777ab",
  "25:cccbb88",
  "15:g 24:ff897888",
  "12:nnooe 24:c77664568",
  "14:klhff9a 23:bb66443343 33:65",
  "15:gfaaaibbbb5422220022 35:65 38:7",
  "13:b 15:ee8866dd8833111100123365 39:5 42:77bbha",
  "7:hh 13:ii 16:gaa5526441100010001366775 41:54488bb 53:8",
  "3:e 5:ggj 9:ggmmffccaa55221000001111112 36:447777758 45:8aaab9 52:ffnn",
  "1:aahheebbaa6cbbf995411000000112111111155 40:9 41:9aa99bcbbdgoppop",
  "3:gfbb98733168866331100001122221122111366 42:9abddcdeeilpprrri 60:g",
  "0:lgffbba9662200342211110011212222112211134 41:66aaddffeeghnnrrrrrr",
  "0:iifebb77552200001111001111111110000111144 41:559aeddeeeedjlpprrrr",
  "0:ihkjbb7755220000000000111221110003363557 40:7aa99ddbbbccbiinnqrr",
  "1:5bbhc7755320001110111122211111225577 37:8898 41:bbabbb776abhgnmorrra",
  "2:00 6:95532221111122211222111114477887 38:888 41:9977866 48:78ccggmmoprr",
  "5:ggb65555312111111111110011 31:4578777767 41:8677788baffiilloorr",
  "7:mmbaaa66222100001111001 30:33555777777 41:6777766aaccihnnpprr",
  "7:llnhhhba65220111011112233443356666 41:657775556 50:9affnnpqq",
  "13:f885511221143333455 37:4 40:11 44:6755588ffnopppp",
  "13:gcd77654343666666 41:8a7654557 50:7hhonppkn",
  "14:jkbc88 21:677 27:4 41:gg88342277klnoqp",
  "15:njjgf 41:ii884422bbmmnopo",
  "17:pe 43:bb7677ddjjlno",
  "44:dffdhhkkkk",
  "16:e 45:h 48:mmnjkk"
];
const cells = document.getElementById("cells");
const cellW = 8.39, cellH = 8.37;
rows.forEach((row, r) => row.split(" ").forEach(run => {
  const [start, classes] = run.split(":");
  [...classes].forEach((c, k) => {
    const x0 = Math.round(428.4 + (+start + k) * cellW), x1 = Math.round(428.4 + (+start + k + 1) * cellW);
    const y0 = Math.round(181 + r * cellH), y1 = Math.round(181 + (r + 1) * cellH);
    make(cells, "rect", { x: x0, y: y0, width: x1 - x0, height: y1 - y0, fill: palette[c] });
  });
}));

// Histogram bars as x:count, each count adding 8.8 units of height.
const dark = "12:1 25:2 27:2 28:8 29:8 30:9 31:8 32:8 33:11 34:13 35:8 36:8 37:7 38:4 39:4 41:2 42:3 44:2 46:3 47:2 48:3 49:3 51:3 54:1 55:3 57:4 58:2 60:5 62:4 63:1 65:2 67:3 68:1 70:4 71:3 72:2 73:8 74:5 75:3 76:7 77:3 78:5 80:2 81:4 82:3 84:1 86:2 88:1 90:2 91:2 93:2 95:7 96:8 98:2 99:3 100:1 102:5 103:9 104:4 106:3 108:3 110:1 115:2 116:3 118:2 120:1 121:2 123:2 125:3 127:2 129:2 132:3 133:4 134:2 136:1 140:1 149:1 150:2 152:2 156:1 158:2 163:3 164:1 169:1 171:1 173:2 182:1 190:1 196:2 198:2 200:1 202:1 204:2 223:1 224:1 240:1 251:2";
const light = "24:1 31:12 37:13 38:13 40:6 43:4 44:6 45:3 47:4 50:4 53:5 56:5 59:4 60:6 64:4 66:5 69:5 70:5 77:5 79:4 80:5 83:5 85:2 87:2 89:4 90:4 92:3 94:4 97:3 101:4 105:4 107:4 109:3 113:2 116:4 119:2 122:3 124:4 126:4 128:5 129:6 132:6 134:4 141:2 147:1 151:2 154:1 157:2 162:2 165:2 168:1 172:2 180:1 188:2 189:3 193:1 197:2 199:2 203:1 206:5 207:5 210:1 212:1 214:1 230:1 233:1 238:1 244:1 252:1 256:1";
const bars = text => text.split(" ").map(b => {
  const [x, n] = b.split(":").map(Number);
  return `M${x} 461v${-8.8 * n}h1.200v${8.8 * n}z`;
}).join("");
document.getElementById("bars-dark").setAttribute("d", bars(dark));
document.getElementById("bars-light").setAttribute("d", bars(light));

const sliders = document.getElementById("sliders");
[["-2.54E-3", 28, "#000080"], ["2.79E-3", 56, "#2868ff"], ["8.12E-3", 83, "#00a0d8"], ["1.35E-2", 111, "#009e38"],
 ["1.88E-2", 138, "#f8f050"], ["2.41E-2", 166, "#f05a10"], ["2.94E-2", 194, "#d01400"], ["3.48E-2", 221, "#7c0000"]
].forEach(([label, x, fill], i) => {
  make(sliders, "path", { d: `M${x} 471l3.500 6h-7z`, fill, stroke: [1, 2, 4].includes(i) ? "#222" : "#fff" });
  make(sliders, "text", { transform: `translate(${x - 2} 480) rotate(90)` }).textContent = label;
});
```
